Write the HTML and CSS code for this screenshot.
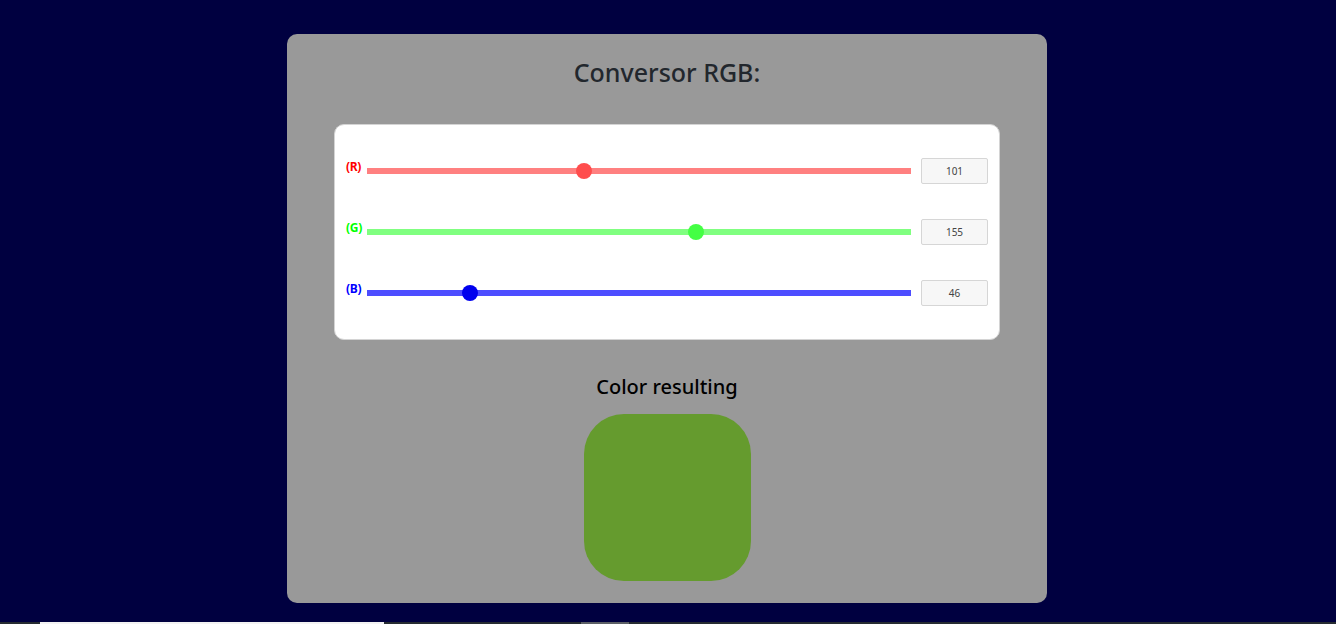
FILE: index.html
```html
<!DOCTYPE html>
<html lang="es">
<head>
<meta charset="utf-8">
<title>Conversor RGB</title>
<link rel="stylesheet" href="styles.css">
</head>
<body>
<main class="page">
  <section class="card">
    <h1 class="title">Conversor RGB:</h1>
    <div class="panel">
      <div class="row">
        <label class="label label-r" for="r">(R)</label>
        <input class="range range-r" id="r" type="range" min="0" max="255" value="101">
        <input class="num" type="text" value="101">
      </div>
      <div class="row">
        <label class="label label-g" for="g">(G)</label>
        <input class="range range-g" id="g" type="range" min="0" max="255" value="155">
        <input class="num" type="text" value="155">
      </div>
      <div class="row">
        <label class="label label-b" for="b">(B)</label>
        <input class="range range-b" id="b" type="range" min="0" max="255" value="46">
        <input class="num" type="text" value="46">
      </div>
    </div>
    <h2 class="subtitle">Color resulting</h2>
    <div class="swatch" style="background: rgb(101, 155, 46);"></div>
  </section>
</main>
<div class="strip">
  <span class="strip-white"></span>
  <span class="strip-gray"></span>
</div>
</body>
</html>
```
FILE: styles.css
```css
html, body {
  margin: 0;
  padding: 0;
}
body {
  height: 624px;
  background: #000040;
  display: flex;
  flex-direction: column;
  font-family: "Noto Sans", "Open Sans", sans-serif;
  overflow: hidden;
}
.page {
  flex: 1;
  padding-top: 34px;
  padding-right: 2px;
  display: flex;
  justify-content: center;
  align-items: flex-start;
}
.card {
  width: 760px;
  box-sizing: border-box;
  background: #999999;
  border-radius: 10px;
  padding: 23px 47px 22px;
  display: flex;
  flex-direction: column;
  align-items: center;
}
.title {
  margin: 0;
  font-size: 25px;
  line-height: 31px;
  font-weight: 500;
  color: #22272d;
}
.panel {
  margin-top: 36px;
  width: 666px;
  box-sizing: border-box;
  background: #ffffff;
  border: 1px solid #d4d4d4;
  border-radius: 10px;
  padding: 33px 11px;
  display: flex;
  flex-direction: column;
  gap: 35px;
}
.row {
  height: 26px;
  display: flex;
  align-items: center;
}
.label {
  width: 21px;
  font-size: 12px;
  font-weight: 700;
  position: relative;
  top: -5px;
  letter-spacing: -0.3px;
}
.label-r { color: #ff0000; }
.label-g { color: #00ff00; }
.label-b { color: #0000ff; }
.range {
  -webkit-appearance: none;
  appearance: none;
  margin: 0;
  width: 544px;
  height: 16px;
  background: transparent;
}
.range::-webkit-slider-runnable-track {
  height: 6px;
}
.range::-webkit-slider-thumb {
  -webkit-appearance: none;
  width: 16px;
  height: 16px;
  border-radius: 50%;
  border: none;
  margin-top: -5px;
}
.range-r::-webkit-slider-runnable-track { background: #ff8080; }
.range-r::-webkit-slider-thumb { background: #ff4d4d; }
.range-g::-webkit-slider-runnable-track { background: #80ff80; }
.range-g::-webkit-slider-thumb { background: #44ff44; }
.range-b::-webkit-slider-runnable-track { background: #4d4dff; }
.range-b::-webkit-slider-thumb { background: #0000ee; }
.num {
  margin-left: 10px;
  width: 67px;
  height: 26px;
  box-sizing: border-box;
  border: 1px solid #d6d6d6;
  border-radius: 2px;
  background: #f7f7f7;
  text-align: center;
  font-family: "Noto Sans", "Open Sans", sans-serif;
  font-size: 10px;
  color: #444;
  padding: 0;
}
.subtitle {
  margin: 35px 0 0;
  font-size: 20px;
  line-height: 24px;
  font-weight: 500;
  color: #000;
}
.swatch {
  margin-top: 15px;
  width: 167px;
  height: 167px;
  border-radius: 40px;
}
.strip {
  height: 2px;
  background: #262c31;
  display: flex;
}
.strip-white {
  margin-left: 40px;
  width: 344px;
  background: #f2f2f2;
}
.strip-gray {
  margin-left: 197px;
  width: 48px;
  background: #5c6066;
}
```
